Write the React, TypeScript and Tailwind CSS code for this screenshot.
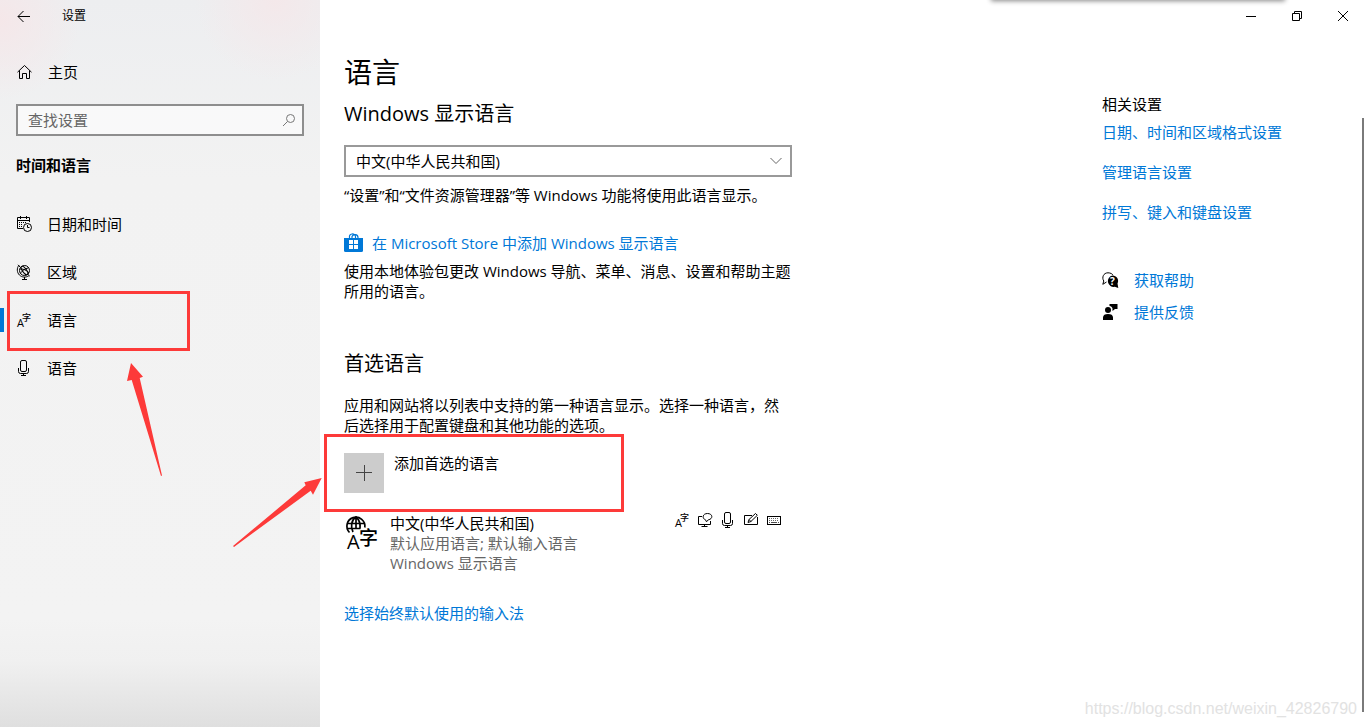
import { useState } from 'react';
import type { FC, ReactNode } from 'react';

const CalendarIcon: FC = () => (
  <svg width="16" height="16" viewBox="0 0 16 16" fill="none" stroke="currentColor">
    <path d="M7 12.5H1.5v-11h12v4.500M1.5 4.500h12" />
    <path d="M4.5 0v3M10.5 0v3" />
    <path d="M3 6.5h1M5 6.5h1M7 6.5h1M9 6.500h1M3 8.5h1M5 8.5h1M3 10.5h1M5 10.5h1" />
    <circle cx="11.5" cy="11.5" r="4" fill="#f2f2f2" />
    <path d="M11.5 9v2.5h2" />
  </svg>
);

const GlobeIcon: FC = () => (
  <svg width="16" height="16" viewBox="0 0 16 16" fill="none" stroke="currentColor">
    <circle cx="8.5" cy="6.5" r="5" />
    <ellipse cx="8.5" cy="6.5" rx="2" ry="5" transform="rotate(-35 8.5 6.5)" />
    <path d="M4.4 9.2C6 6.8 9 4.6 12.6 3.8M3.8 5C6 4.4 10.8 6 12.9 8.8" />
    <path d="M3 1.2C0.6 4 0.8 8.4 3.4 11c2.4 2.4 6.4 2.8 9.4.8M2 0.8l2.2 2.4M11.4 9.8l2.4 2.4M8.5 13v2.5M6 15.5h5" />
  </svg>
);

const LanguageIcon: FC = () => (
  <svg width="16" height="20" viewBox="0 0 16 20" fill="currentColor" aria-hidden="true">
    <text x="1" y="17" fontSize="11" fontWeight="400" fontFamily="Open Sans, sans-serif">A</text>
    <text x="6" y="11" fontSize="9" fontWeight="500" fontFamily="Noto Sans CJK SC, sans-serif">字</text>
  </svg>
);

const MicIcon: FC = () => (
  <svg width="16" height="16" viewBox="0 0 16 16" fill="none" stroke="currentColor">
    <rect x="4.5" y="0.5" width="6" height="11" rx="1.5" />
    <path d="M2.5 8v3.5a2 2 0 0 0 2 2h6a2 2 0 0 0 2-2V8M7.500 13.5v2M5 15.5h5" />
  </svg>
);

const DisplayIcon: FC = () => (
  <svg width="16" height="16" viewBox="0 0 16 16" fill="none" stroke="currentColor">
    <path d="M5 4.5H1.500v8h12V9M7.500 12.5v2M4.500 14.5h6" />
    <path d="M8.5 7.8C4.8 6.6 5.4 1.5 10.5 1.5c5.4 0 5.8 5.6.8 6.3L9.5 9.8z" />
  </svg>
);

const PenIcon: FC = () => (
  <svg width="16" height="16" viewBox="0 0 16 16" fill="none" stroke="currentColor">
    <path d="M9 3.5H1.5v9h13V5M5 10.5l1-3 6.5-6 1.8 1.8-6.4 6.2zM6 7.5l1.9 2" />
  </svg>
);

const KeyboardIcon: FC = () => (
  <svg width="16" height="16" viewBox="0 0 16 16" fill="none" stroke="currentColor">
    <rect x="1.5" y="4.5" width="13" height="8" />
    <path strokeOpacity="0.6" d="M3 6.5h10M3 8.5h10" strokeDasharray="1 1" />
    <path strokeOpacity="0.7" d="M3 10.5h1M5 10.5h6M12 10.5h1" />
  </svg>
);

const StoreIcon: FC = () => (
  <svg width="20" height="20" viewBox="0 0 20 20">
    <path fill="none" stroke="#0078d7" strokeWidth="1.2" d="M5.5 6V4.5a3 3 0 0 1 6-1V6M8 6V3.5c1-2.8 6-2.6 6 1V6" />
    <path fill="#0078d7" d="M0 5h19v12.5a1.5 1.5 0 0 1-1.5 1.5h-16A1.5 1.5 0 0 1 0 17.5z" />
    <path fill="#fff" d="M5 7h4v4H5zM10 7h4v4h-4zM5 12h4v4H5zM10 12h4v4h-4z" />
  </svg>
);

const HelpIcon: FC = () => (
  <svg width="17" height="17" viewBox="0 0 17 17">
    <path fill="none" stroke="#000" d="M4.5 10L.8 12.300 1.800 9C-.5 5.500 1.5.8 6 .8c2.5 0 4.5 1.2 5 2.400" />
    <path d="M10.500 3.500a5.500 5.500 0 0 1 5 8l.8 4.500-3.500-1.200a5.700 5.700 0 1 1-2.300-11.300z" />
    <text x="8" y="13" fill="#fff" fontSize="10" fontWeight="700" fontFamily="Open Sans, sans-serif">?</text>
  </svg>
);

const FeedbackIcon: FC = () => (
  <svg width="17" height="17" viewBox="0 0 17 17">
    <circle cx="6" cy="6" r="3" />
    <path d="M1 16v-2.5C1 11 3 10 6 10s5 1 5 3.500V16zM7.500 0h8v5h-2.500l-2.500 2V4.500C10 3 9 2 7.500 2z" />
  </svg>
);

const LanguagePackIcon: FC = () => (
  <svg width="34" height="42" viewBox="0 0 34 42" aria-hidden="true">
    <g fill="none" stroke="#000" strokeWidth="1.7">
      <path d="M5.500 19.500A9 9 0 1 1 20.800 14.500" />
      <path d="M3 10.500h18M3.500 15.500h13M12 4v12M9 19C6.500 14 7 7 12 4c3.500 3 4.500 7 4 11.500" />
    </g>
    <text x="3" y="36" fontSize="20" fontWeight="500" fontFamily="Open Sans, sans-serif">A</text>
    <text x="15" y="32" fontSize="19" fontWeight="500" fontFamily="Noto Sans CJK SC, sans-serif">字</text>
  </svg>
);

const HomeIcon: FC = () => (
  <svg width="16" height="16" viewBox="0 0 16 16" fill="none" stroke="currentColor">
    <path d="M1.5 8.200L8.5 1.5l7 6.700M3.5 6.500v8h3v-5h4v5h3v-8" />
  </svg>
);

const navItems: { name: string; icon: ReactNode }[] = [
  { name: '日期和时间', icon: <CalendarIcon /> },
  { name: '区域', icon: <GlobeIcon /> },
  { name: '语言', icon: <LanguageIcon /> },
  { name: '语音', icon: <MicIcon /> },
];

const relatedLinks = ['日期、时间和区域格式设置', '管理语言设置', '拼写、键入和键盘设置'];

const supportLinks = [
  { name: '获取帮助', icon: <HelpIcon /> },
  { name: '提供反馈', icon: <FeedbackIcon /> },
];

const Sidebar: FC = () => {
  const [active, setActive] = useState('语言');

  return (
    <aside className="relative w-80 shrink-0 bg-[radial-gradient(circle_at_0_20px,#f5e7e9,transparent_80px),radial-gradient(circle_at_275px_0,#f4e8ea,transparent_80px),linear-gradient(to_bottom,#edeef0,#f2f2f2_180px,#f3f3f3_85%,#f0f0f0_91%,#dfdfdf)]">
      <div className="flex h-8 items-center gap-8 pl-4">
        <button type="button" aria-label="返回">
          <svg width="14" height="14" viewBox="0 0 14 14" fill="none" stroke="#000">
            <path d="M14 7.500H2M7.500 2L2 7.500L7.500 13" />
          </svg>
        </button>
        <span className="text-xs">设置</span>
      </div>

      <a href="#home" className="mt-5 flex h-10 items-center gap-4 pl-4">
        <HomeIcon />
        主页
      </a>

      <div className="mx-4 mt-3 flex h-8 items-center border-2 border-[#8e8e8e] bg-white/60 pr-1.5 pl-2.5">
        <input
          type="search"
          aria-label="查找设置"
          placeholder="查找设置"
          className="min-w-0 flex-1 outline-none placeholder:text-[#666]"
        />
        <svg width="14" height="14" viewBox="0 0 14 14" fill="none" stroke="#777">
          <circle cx="8.5" cy="5.5" r="4" />
          <path d="M5.5 8.5L1 13" />
        </svg>
      </div>

      <h2 className="mt-[19px] ml-4 font-bold">时间和语言</h2>

      <nav className="mt-[25px]">
        {navItems.map((item) => (
          <div key={item.name} className="relative">
            <button
              type="button"
              onClick={() => setActive(item.name)}
              className="flex h-12 w-full items-center gap-[15px] pl-4"
            >
              {item.icon}
              {item.name}
            </button>
            {active === item.name && <span className="absolute top-3 left-0 h-6 w-1 bg-[#0078d7]" />}
            {item.name === '语言' && (
              <span className="pointer-events-none absolute -top-[5px] left-[7px] h-[60px] w-[183px] border-3 border-[#fd3a39]" />
            )}
          </div>
        ))}
      </nav>

      {/* Hand-drawn arrows over the panel */}
      <svg
        className="pointer-events-none absolute top-[360px] left-[120px] text-[#fd3a39]"
        width="204"
        height="190"
        viewBox="0 0 204 190"
        fill="currentColor"
      >
        <path d="M11 3L23 16.700l-3.300 1.300L42 115.500 41 116 11.700 20 7 21z" />
        <path d="M201.700 118l-17.400 4.300 1.400 3L113 186l1 1 76.700-56.300L193 134.700z" />
      </svg>
    </aside>
  );
};

const LanguageSettings: FC = () => (
  <section className="flex-1 pt-[22px] pl-6">
    <h1 className="text-[28px] leading-9">语言</h1>
    <h2 className="mt-[10px] text-xl leading-7">Windows 显示语言</h2>
    <div className="relative mt-[17px] h-8 w-[448px]">
      <select
        aria-label="Windows 显示语言"
        className="h-full w-full appearance-none border-2 border-[#999] bg-white pl-2.5"
      >
        <option>中文(中华人民共和国)</option>
      </select>
      <svg
        className="pointer-events-none absolute top-3 right-2.5"
        width="12"
        height="8"
        viewBox="0 0 12 8"
        fill="none"
        stroke="#666"
      >
        <path d="M0.5 1L6 6.5 11.5 1" />
      </svg>
    </div>
    <p className="mt-2">“设置”和“文件资源管理器”等 Windows 功能将使用此语言显示。</p>

    <a href="#store" className="mt-7 flex items-center gap-2 text-[#0078d7]">
      <StoreIcon />
      在 Microsoft Store 中添加 Windows 显示语言
    </a>
    <p className="mt-2 w-[448px]">
      使用本地体验包更改 Windows 导航、菜单、消息、设置和帮助主题所用的语言。
    </p>

    <h2 className="mt-[49px] text-xl leading-7">首选语言</h2>
    <p className="mt-[17px] w-[448px]">
      应用和网站将以列表中支持的第一种语言显示。选择一种语言，然后选择用于配置键盘和其他功能的选项。
    </p>

    <div className="relative mt-[18px] w-[448px]">
      <button type="button" className="flex w-full items-start gap-2.5">
        <span className="flex h-10 w-10 items-center justify-center bg-[#ccc]">
          <svg width="16" height="16" viewBox="0 0 16 16" stroke="#444">
            <path d="M8.5 0v16M0 7.500h16" />
          </svg>
        </span>
        添加首选的语言
      </button>
      <span className="pointer-events-none absolute -top-[19px] -left-5 h-[78px] w-[300px] border-3 border-[#fd3a39]" />
    </div>

    <div className="mt-5 flex w-[448px] items-start gap-3">
      <LanguagePackIcon />
      <div className="flex-1 text-[#666]">
        <p className="text-black">中文(中华人民共和国)</p>
        <p>默认应用语言; 默认输入语言</p>
        <p>Windows 显示语言</p>
      </div>
      <div className="flex h-3.5 items-center gap-[7px] pr-2.5">
        <LanguageIcon />
        <DisplayIcon />
        <MicIcon />
        <PenIcon />
        <KeyboardIcon />
      </div>
    </div>

    <a href="#input" className="mt-[30px] inline-block text-[#0078d7]">
      选择始终默认使用的输入法
    </a>
  </section>
);

const RelatedSettings: FC = () => (
  <aside className="w-[260px] shrink-0 pt-[62px]">
    <h2>相关设置</h2>
    <ul className="mt-2 flex flex-col gap-5 text-[#0078d7]">
      {relatedLinks.map((name) => (
        <li key={name}>
          <a href="#related">{name}</a>
        </li>
      ))}
    </ul>
    <ul className="mt-12 flex flex-col gap-3">
      {supportLinks.map((link) => (
        <li key={link.name}>
          <a href="#support" className="flex items-center gap-[15px] text-[#0078d7]">
            {link.icon}
            {link.name}
          </a>
        </li>
      ))}
    </ul>
  </aside>
);

const WindowControls: FC = () => (
  <div className="flex h-8 justify-end">
    <button type="button" aria-label="最小化" className="flex w-[46px] items-center justify-center">
      <svg width="10" height="10" viewBox="0 0 10 10" stroke="#000">
        <path d="M0 5.5h10" />
      </svg>
    </button>
    <button type="button" aria-label="还原" className="flex w-[46px] items-center justify-center">
      <svg width="10" height="10" viewBox="0 0 10 10" fill="none" stroke="#000">
        <path d="M0.5 2.5h7v7h-7zM2.5 2.5v-2h7v7h-2" />
      </svg>
    </button>
    <button type="button" aria-label="关闭" className="flex w-[46px] items-center justify-center">
      <svg width="10" height="10" viewBox="0 0 10 10" stroke="#000">
        <path d="M0 0l10 10M10 0L0 10" />
      </svg>
    </button>
  </div>
);

export default function App() {
  return (
    <div className="relative flex min-h-screen overflow-hidden bg-white font-['Open_Sans','Noto_Sans_CJK_SC',sans-serif] text-[15px] leading-5 text-black">
      <Sidebar />
      <main className="flex min-w-0 flex-1 flex-col">
        <WindowControls />
        <div className="flex flex-1">
          <LanguageSettings />
          <RelatedSettings />
          <div className="mt-[86px] mr-0.5 mb-[15px] w-0.5 bg-[#7a7a7a]" />
        </div>
      </main>
      <div className="absolute -top-2 right-[82px] h-2 w-[292px] shadow-[0_0_5px_1px_#888]" />
      <span className="absolute right-[9px] bottom-2 font-['Liberation_Sans',sans-serif] text-base leading-5 text-[#e2e2e2]">
        https://blog.csdn.net/weixin_42826790
      </span>
    </div>
  );
}
